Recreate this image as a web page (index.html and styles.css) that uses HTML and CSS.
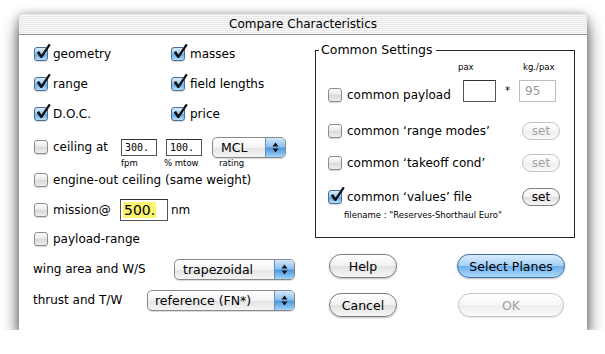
FILE: index.html
```html
<!DOCTYPE html>
<html lang="en">
<head>
  <meta charset="UTF-8">
  <title>Compare Characteristics</title>
  <link rel="stylesheet" href="styles.css">
</head>
<body>

  <div class="window">
    <div class="titlebar">Compare Characteristics</div>

    <div class="content">
      <!-- Left column: what to compare -->
      <div class="left">
        <div class="checks">
          <label class="opt"><span class="cb on"><svg viewBox="0 0 17 17"><path d="M2.5 9 L4.8 7.6 L7 11 L14 0.8 L15.8 2 L7.6 14.2 L6.2 14.2 Z"/></svg></span>geometry</label>
          <label class="opt"><span class="cb on"><svg viewBox="0 0 17 17"><path d="M2.5 9 L4.8 7.6 L7 11 L14 0.8 L15.8 2 L7.6 14.2 L6.2 14.2 Z"/></svg></span>masses</label>
          <label class="opt"><span class="cb on"><svg viewBox="0 0 17 17"><path d="M2.5 9 L4.8 7.6 L7 11 L14 0.8 L15.8 2 L7.6 14.2 L6.2 14.2 Z"/></svg></span>range</label>
          <label class="opt"><span class="cb on"><svg viewBox="0 0 17 17"><path d="M2.5 9 L4.8 7.6 L7 11 L14 0.8 L15.8 2 L7.6 14.2 L6.2 14.2 Z"/></svg></span>field lengths</label>
          <label class="opt"><span class="cb on"><svg viewBox="0 0 17 17"><path d="M2.5 9 L4.8 7.6 L7 11 L14 0.8 L15.8 2 L7.6 14.2 L6.2 14.2 Z"/></svg></span>D.O.C.</label>
          <label class="opt"><span class="cb on"><svg viewBox="0 0 17 17"><path d="M2.5 9 L4.8 7.6 L7 11 L14 0.8 L15.8 2 L7.6 14.2 L6.2 14.2 Z"/></svg></span>price</label>
        </div>

        <div class="row ceiling">
          <label class="opt w-ceil"><span class="cb"></span>ceiling at</label>
          <span class="field mono f-fpm">300.</span>
          <span class="field mono f-mtow">100.</span>
          <span class="popup p-mcl"><span class="pv">MCL</span><span class="arrows"><svg viewBox="0 0 7 11"><path d="M0.5 4.5 L3.5 0.5 L6.5 4.5 Z M0.5 6.5 L3.5 10.5 L6.5 6.5 Z"/></svg></span></span>
        </div>
        <div class="units">
          <span class="u-fpm">fpm</span><span class="u-mtow">% mtow</span><span>rating</span>
        </div>

        <div class="row r-engine">
          <label class="opt"><span class="cb"></span>engine-out ceiling (same weight)</label>
        </div>
        <div class="row r-mission">
          <label class="opt w-mission"><span class="cb"></span>mission@</label>
          <span class="field f-mission"><span class="sel">500.</span></span>
          <span class="nm">nm</span>
        </div>
        <div class="row r-payload">
          <label class="opt"><span class="cb"></span>payload-range</label>
        </div>

        <div class="pair r-wing">
          <span>wing area and W/S</span>
          <span class="popup p-wing"><span class="pv">trapezoidal</span><span class="arrows"><svg viewBox="0 0 7 11"><path d="M0.5 4.5 L3.5 0.5 L6.5 4.5 Z M0.5 6.5 L3.5 10.5 L6.5 6.5 Z"/></svg></span></span>
        </div>
        <div class="pair r-thrust">
          <span>thrust and T/W</span>
          <span class="popup p-thrust"><span class="pv">reference (FN*)</span><span class="arrows"><svg viewBox="0 0 7 11"><path d="M0.5 4.5 L3.5 0.5 L6.5 4.5 Z M0.5 6.5 L3.5 10.5 L6.5 6.5 Z"/></svg></span></span>
        </div>
      </div>

      <!-- Right column: common settings + actions -->
      <div class="right">
        <div class="group">
          <span class="legend">Common Settings</span>

          <div class="pax-row"><span class="u-pax">pax</span><span>kg./pax</span></div>
          <div class="payload">
            <label class="opt w-payload"><span class="cb"></span>common payload</label>
            <span class="field f-pax"></span>
            <span class="times">*</span>
            <span class="field f-kg">95</span>
          </div>

          <div class="line r-modes">
            <label class="opt"><span class="cb"></span>common ‘range modes’</label>
            <button class="small-btn" disabled>set</button>
          </div>
          <div class="line r-takeoff">
            <label class="opt"><span class="cb"></span>common ‘takeoff cond’</label>
            <button class="small-btn" disabled>set</button>
          </div>
          <div class="line r-values">
            <label class="opt"><span class="cb on"><svg viewBox="0 0 17 17"><path d="M2.5 9 L4.8 7.6 L7 11 L14 0.8 L15.8 2 L7.6 14.2 L6.2 14.2 Z"/></svg></span>common ‘values’ file</label>
            <button class="small-btn">set</button>
          </div>
          <div class="fname">filename : "Reserves-Shorthaul Euro"</div>
        </div>

        <div class="buttons">
          <button class="btn">Help</button>
          <button class="btn default">Select Planes</button>
          <button class="btn">Cancel</button>
          <button class="btn ok" disabled>OK</button>
        </div>
      </div>
    </div>
  </div>

</body>
</html>
```

FILE: styles.css
```css
/* Base */
* {
  box-sizing: border-box;
}

body {
  margin: 0;
  background: #fff;
  font-family: "DejaVu Sans", "Noto Sans", sans-serif;
  font-size: 12px;
  color: #000;
}

/* Window frame */
.window {
  width: 568px;
  height: 317px;
  margin: 13px 0 0 19px;
  background: #fff;
  border-radius: 5px 5px 0 0;
  box-shadow: 0 11px 18px rgba(0, 0, 0, 0.6), 0 2px 10px rgba(0, 0, 0, 0.35);
  display: flex;
  flex-direction: column;
}

.titlebar {
  height: 22px;
  line-height: 20px;
  text-align: center;
  font-size: 12px;
  border-radius: 5px 5px 0 0;
  border-top: 1px solid #d0d0d0;
  border-bottom: 1px solid #969696;
  background: repeating-linear-gradient(#e8e8e8 0 1px, #f8f8f8 1px 2px);
}

.content {
  flex: 1;
  display: flex;
}

/* Left column */
.left {
  width: 295px;
  padding: 4px 0 0 15px;
}

.checks {
  display: grid;
  grid-template-columns: 137px auto;
  grid-auto-rows: 30px;
  align-items: center;
}

.opt {
  display: flex;
  align-items: center;
  gap: 5px;
  white-space: nowrap;
}

/* Aqua checkbox */
.cb {
  position: relative;
  flex: none;
  width: 14px;
  height: 14px;
  border: 1px solid #8c8c8c;
  border-radius: 3px;
  background: linear-gradient(#fdfdfd, #e8e8e8 50%, #d8d8d8 51%, #efefef);
  box-shadow: 0 1px 1px rgba(0, 0, 0, 0.15);
}

.cb.on {
  border-color: #4c6f96;
  background: linear-gradient(#d8ecfc, #9dcaf2 45%, #6aabe6 55%, #b4ddfb);
}

.cb svg {
  position: absolute;
  left: -1px;
  top: -5px;
  width: 18px;
  height: 18px;
  fill: #111;
}

.row {
  display: flex;
  align-items: center;
}

.ceiling {
  margin-top: 6px;
  height: 24px;
}

.w-ceil { width: 87px; }
.w-mission { width: 86px; }

/* Text fields */
.field {
  display: inline-block;
  border: 1px solid #555;
  border-top-color: #333;
  background: #fff;
}

.mono {
  height: 17px;
  padding-left: 3px;
  font-family: "DejaVu Sans Mono", monospace;
  font-size: 10px;
  line-height: 15px;
}

.f-fpm { width: 36px; margin-right: 9px; }
.f-mtow { width: 36px; margin-right: 10px; }

.f-mission {
  width: 48px;
  height: 22px;
  padding: 2px 0 0 2px;
}

.sel {
  display: inline-block;
  padding: 0 1px;
  background: #fbf46e;
  font-size: 14px;
  line-height: 16px;
}

.nm { margin-left: 3px; }

/* Popup menus */
.popup {
  display: flex;
  height: 21px;
  border: 1px solid #8a8a8a;
  border-radius: 5px;
  overflow: hidden;
  background: linear-gradient(#ffffff, #f3f3f3 50%, #e3e3e3 51%, #f5f5f5);
  box-shadow: 0 1px 1px rgba(0, 0, 0, 0.15);
}

.pv {
  flex: 1;
  padding-left: 8px;
  line-height: 19px;
  font-size: 12.5px;
}

.arrows {
  width: 20px;
  display: flex;
  align-items: center;
  justify-content: center;
  border-left: 1px solid #6b8fb8;
  background: linear-gradient(#d3e8fb, #8dc1ef 45%, #4f9ae0 55%, #a2d2f8);
}

.arrows svg {
  width: 7px;
  height: 11px;
  fill: #111;
}

.p-mcl { width: 74px; }
.p-wing { width: 121px; }
.p-thrust { width: 148px; }
.p-thrust .pv { padding-left: 7px; }

.units {
  display: flex;
  height: 9px;
  padding-left: 87px;
  font-size: 8.5px;
  line-height: 9px;
}

.u-fpm { width: 43px; }
.u-mtow { width: 55px; }

.r-engine { height: 24px; }
.r-mission { height: 36px; }
.r-payload { height: 22px; }

.pair {
  display: flex;
  align-items: center;
  justify-content: space-between;
  width: 262px;
  margin-left: -1px;
}

.r-wing { height: 38px; }
.r-thrust { height: 24px; }

/* Right column */
.right {
  width: 273px;
}

.group {
  position: relative;
  width: 260px;
  height: 188px;
  margin: 15px 0 0 1px;
  padding: 10px 14px 0 12px;
  border: 1px solid #262626;
}

.legend {
  position: absolute;
  left: 3px;
  top: -9px;
  padding: 0 3px 0 2px;
  background: #fff;
  font-size: 12.5px;
  line-height: 16px;
}

.pax-row {
  display: flex;
  height: 12px;
  padding-left: 130px;
  font-size: 8.5px;
  line-height: 12px;
}

.u-pax { width: 65px; }

.payload {
  display: flex;
  align-items: flex-end;
  height: 29px;
}

.w-payload {
  width: 135px;
  line-height: 14px;
}

.f-pax {
  width: 33px;
  height: 22px;
}

.times {
  width: 23px;
  align-self: center;
  margin-top: 6px;
  text-align: center;
  font-size: 10px;
}

.f-kg {
  width: 37px;
  height: 22px;
  padding: 3px 0 0 5px;
  border-color: #bdbdbd;
  color: #9a9a9a;
}

.line {
  display: flex;
  align-items: center;
  justify-content: space-between;
  height: 24px;
}

.r-modes { margin-top: 17px; }
.r-takeoff { margin-top: 8px; }
.r-values { margin-top: 10px; }

.small-btn {
  width: 38px;
  height: 18px;
  padding: 0;
  border: 1px solid #7d7d7d;
  border-radius: 9px;
  background: linear-gradient(#ffffff, #f1f1f1 50%, #e0e0e0 51%, #f6f6f6);
  font-family: inherit;
  font-size: 12px;
  line-height: 15px;
  color: #000;
}

.small-btn:disabled {
  border-color: #c2c2c2;
  background: linear-gradient(#ffffff, #f7f7f7 50%, #eeeeee 51%, #fafafa);
  color: #a3a3a3;
}

.fname {
  height: 12px;
  padding-left: 16px;
  font-size: 8.5px;
  line-height: 12px;
}

/* Push buttons */
.buttons {
  display: grid;
  grid-template-columns: 68px 108px;
  column-gap: 60px;
  row-gap: 15px;
  padding: 16px 0 0 15px;
}

.btn {
  height: 24px;
  padding: 0;
  border: 1px solid #7d7d7d;
  border-radius: 12px;
  background: linear-gradient(#ffffff, #f1f1f1 50%, #e1e1e1 51%, #f7f7f7);
  box-shadow: 0 1px 2px rgba(0, 0, 0, 0.25);
  font-family: inherit;
  font-size: 12.5px;
  color: #000;
}

.btn.default {
  border-color: #3f6fa6;
  background: linear-gradient(#d9ecfd, #a6d0f6 48%, #6fb0ec 52%, #aadafc);
}

.btn.ok {
  width: 106px;
  justify-self: center;
}

.btn:disabled {
  border-color: #c6c6c6;
  background: linear-gradient(#ffffff, #f8f8f8 50%, #eeeeee 51%, #fafafa);
  box-shadow: 0 1px 1px rgba(0, 0, 0, 0.1);
  color: #a0a0a0;
}
```
